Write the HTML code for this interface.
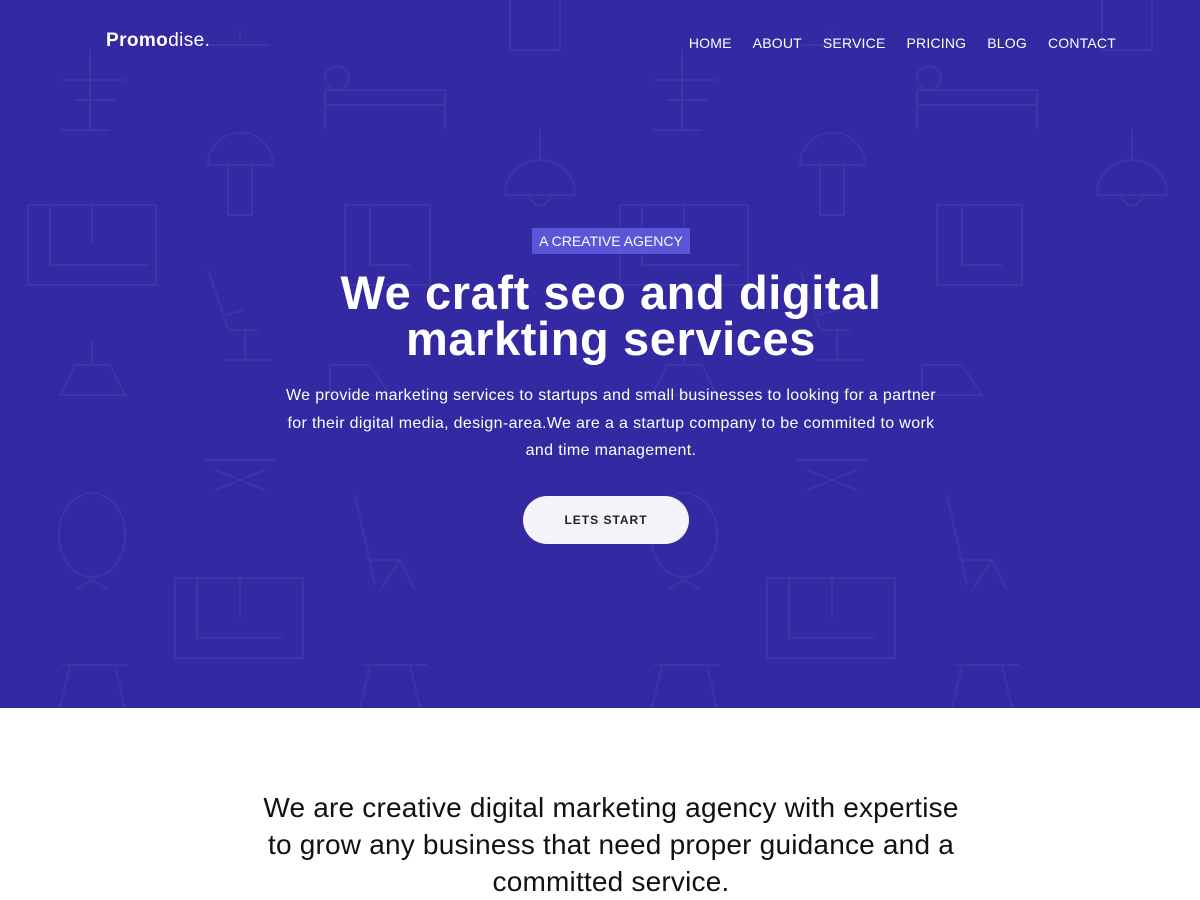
<!DOCTYPE html>
<html><head><meta charset="utf-8"><style>
*{margin:0;padding:0;box-sizing:border-box}
body{width:1200px;height:900px;overflow:hidden;font-family:"Liberation Sans",sans-serif;background:#fff}
.hero{position:relative;height:708px;background:#3229a3;overflow:hidden}
.bg{position:absolute;left:0;top:0}
.logo{position:absolute;left:106px;top:30px;color:#fff;font-size:19px;letter-spacing:.4px}
.logo b{font-weight:900}
.nav{position:absolute;right:84px;top:35px;display:flex;gap:21px;color:#fff;font-size:14px;letter-spacing:.2px}
.badge{position:absolute;left:532px;top:228px;width:158px;height:26px;background:#5b55d8;color:#fff;font-size:14px;text-align:center;line-height:26px}
h1{position:absolute;left:0;width:1222px;top:270px;text-align:center;color:#fff;font-size:47px;line-height:46px;font-weight:bold;letter-spacing:.6px}
.p{position:absolute;left:0;width:1222px;top:382px;text-align:center;color:#fff;font-size:16px;line-height:27.5px;letter-spacing:.35px}
.btn{position:absolute;left:523px;top:496px;width:166px;height:48px;border-radius:24px;background:#f4f3fa;color:#222;font-size:12px;font-weight:bold;letter-spacing:1px;text-align:center;line-height:48px}
.sub{position:absolute;top:789px;left:0;width:1222px;text-align:center;font-size:28px;line-height:37px;color:#111;letter-spacing:.2px}
</style></head><body>
<div class="hero">
<svg class="bg" width="1200" height="708" fill="none" stroke="#463eb0" stroke-width="2" opacity="0.55">
<g id="t">
<path d="M60 80h65M90 50v80M75 100h40M60 130h50"/>
<circle cx="337" cy="78" r="12"/><path d="M325 90h120v40M325 90v40M325 105h120"/>
<path d="M240 30v10M210 45h60"/>
<path d="M208 165a32 32 0 0 1 65 0zM228 165v50h24v-50"/>
<path d="M28 205h128v80H28zM50 205v60h100M92 205v40"/>
<path d="M208 270l20 60h30M225 315l20 -5M245 330v30M225 360h45"/>
<path d="M60 395h65l-15-30h-35zM92 365v-25"/>
<path d="M205 460h70M215 470l50 20M265 470l-50 20"/>
<ellipse cx="92" cy="535" rx="33" ry="42"/><path d="M75 590l17-10 17 10"/>
<path d="M175 578h128v80H175zM197 578v60h85M240 578v40"/>
<path d="M70 665l-10 43M115 665l10 43M62 665h65"/>
<path d="M355 495l20 90M370 560h30l15 30M380 590l20-30"/>
<path d="M345 205h85v80h-85zM370 205v60h40"/>
<path d="M330 365h40l20 30h-60z"/>
<path d="M510 0v50h50V0"/>
<path d="M540 130v30M505 195a35 35 0 0 1 70 0zM530 195a10 10 0 0 0 20 0"/>
<path d="M370 665l-10 43M410 665l10 43M362 665h65"/>
</g>
<use href="#t" x="592"/>
</svg>
<div class="logo"><b>Promo</b>dise.</div>
<div class="nav"><span>HOME</span><span>ABOUT</span><span>SERVICE</span><span>PRICING</span><span>BLOG</span><span>CONTACT</span></div>
<div class="badge">A CREATIVE AGENCY</div>
<h1>We craft seo and digital<br>markting services</h1>
<div class="p">We provide marketing services to startups and small businesses to looking for a partner<br>for their digital media, design-area.We are a a startup company to be commited to work<br>and time management.</div>
<div class="btn">LETS START</div>
</div>
<div class="sub">We are creative digital marketing agency with expertise<br>to grow any business that need proper guidance and a<br>committed service.</div>
</body></html>
